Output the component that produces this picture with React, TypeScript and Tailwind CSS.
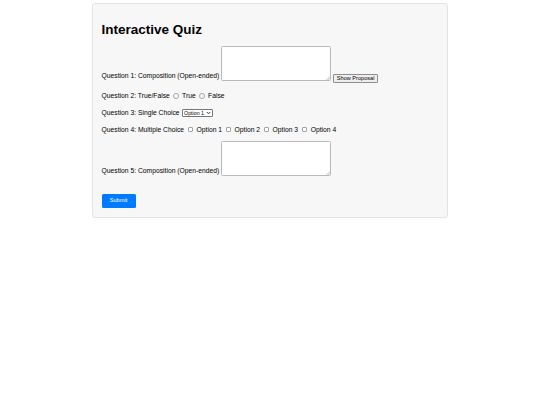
import { useState } from 'react';

const FONT = { fontFamily: '"Liberation Sans", Arial, sans-serif' };

function Grip() {
  return (
    <svg className="absolute right-[1px] bottom-[1px]" width="4" height="4" viewBox="0 0 4 4">
      <path d="M4 0.5 L0.5 4 M4 2.3 L2.3 4" stroke="#9a9a9a" strokeWidth="0.6" />
    </svg>
  );
}

function Area() {
  return (
    <span className="relative inline-block">
      <textarea className="block w-[110px] h-[35px] resize-none bg-white border border-[#b9b9b9] rounded-[1.5px] outline-none" />
      <Grip />
    </span>
  );
}

function Radio({ name, label }: { name: string; label: string }) {
  return (
    <label className="inline-flex items-center">
      <input
        type="radio"
        name={name}
        className="appearance-none w-[5.5px] h-[5.5px] rounded-full border border-[#a3a3a3] bg-white ml-[3.5px] mr-[3.3px] checked:bg-[#0075ff]"
      />
      <span>{label}</span>
    </label>
  );
}

function Check({ label }: { label: string }) {
  return (
    <label className="inline-flex items-center">
      <input
        type="checkbox"
        className="appearance-none w-[5.5px] h-[5.5px] rounded-[1px] border border-[#a3a3a3] bg-white ml-[3.5px] mr-[3.5px] checked:bg-[#0075ff]"
      />
      <span>{label}</span>
    </label>
  );
}

export default function App() {
  const [showProposal, setShowProposal] = useState(false);

  return (
    <div className="bg-white min-h-[405px] pt-[3px]" style={FONT}>
      <div className="mx-auto w-[356px] bg-[#f7f7f7] border border-[#e3e3e3] rounded-[3px] px-[8.5px] pt-[17.5px] pb-[9px] text-[6.75px] leading-[7.8px] text-black">
        <h1 className="text-[13.5px] leading-[15.5px] font-bold mb-[9px]">Interactive Quiz</h1>

        <div className="flex items-end gap-[2px] mb-[11px]">
          <span className="mb-[1px]">Question 1: Composition (Open-ended)</span>
          <Area />
          <button
            onClick={() => setShowProposal(!showProposal)}
            className="mb-[-2px] h-[9px] px-[2.5px] text-[5.6px] leading-[7px] bg-[#efefef] border border-[#8d8d8d] rounded-[1px] text-black"
          >
            Show Proposal
          </button>
        </div>

        <div className="flex items-center mb-[9.5px]">
          <span>Question 2: True/False</span>
          <Radio name="q2" label="True" />
          <Radio name="q2" label="False" />
        </div>

        <div className="flex items-center mb-[8.5px]">
          <span className="mr-[2px]">Question 3: Single Choice</span>
          <span className="inline-flex items-center h-[8px] bg-white border border-[#767676] rounded-[1px] pl-[1.5px] pr-[1px]">
            <select className="appearance-none bg-transparent outline-none text-[5.3px] leading-[6px] text-black">
              <option>Option 1</option>
              <option>Option 2</option>
              <option>Option 3</option>
            </select>
            <svg width="5" height="4" viewBox="0 0 5 4" className="ml-[1px]">
              <path d="M0.8 1 L2.5 2.8 L4.2 1" stroke="#222" strokeWidth="0.9" fill="none" />
            </svg>
          </span>
        </div>

        <div className="flex items-center mb-[7px]">
          <span>Question 4: Multiple Choice</span>
          <Check label="Option 1" />
          <Check label="Option 2" />
          <Check label="Option 3" />
          <Check label="Option 4" />
        </div>

        <div className="flex items-end gap-[2px] mb-[18px]">
          <span className="mb-[1px]">Question 5: Composition (Open-ended)</span>
          <Area />
        </div>

        <button className="w-[34px] h-[14px] bg-[#007bff] text-white text-[5.6px] rounded-[1.5px]">
          Submit
        </button>
      </div>
    </div>
  );
}
